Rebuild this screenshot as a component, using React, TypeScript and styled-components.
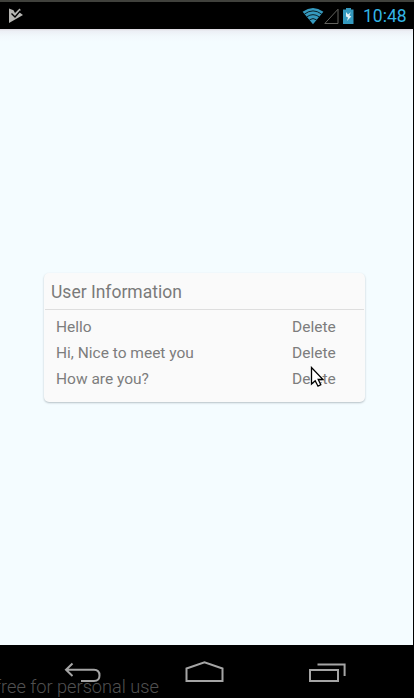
import React from 'react';
import styled, { createGlobalStyle } from 'styled-components';

const GlobalStyle = createGlobalStyle`
  * { box-sizing: border-box; }
  body { margin: 0; background: #000; overflow: hidden; }
`;

const Device = styled.div`
  position: relative;
  display: flex;
  flex-direction: column;
  width: 414px;
  height: 698px;
  overflow: hidden;
  background: #000;
  border-top: 2px solid #40413c;
  font-family: Roboto, sans-serif;
`;

const StatusBar = styled.header`
  display: flex;
  align-items: center;
  justify-content: space-between;
  height: 27px;
  padding: 0 7px 0 8px;
`;

const StatusIcons = styled.div`
  display: flex;
  align-items: center;
  height: 27px;
`;

const Clock = styled.time`
  width: 44px;
  margin-left: 6px;
  color: #33b5e5;
  font-size: 17.5px;
  line-height: 28px;
  white-space: nowrap;
`;

const Icon = styled.svg`
  display: block;
  flex: none;
`;

const Screen = styled.main`
  display: flex;
  flex: none;
  align-items: flex-start;
  width: 413px;
  height: 616px;
  padding: 244px 0 0 44px;
  background: linear-gradient(#dcd8df 0, #eceff5 2px, #f1f8fc 7px, #f4fcff 13px);
`;

const Card = styled.section`
  width: 321px;
  height: 129px;
  padding: 0 1px;
  background: #fafafa;
  border-radius: 5px;
  box-shadow: 0 1px 2px rgba(40, 55, 65, 0.3);
`;

const CardTitle = styled.h1`
  height: 37px;
  margin: 0;
  padding: 1px 0 0 6px;
  border-bottom: 1px solid #dedede;
  color: #7a7a7a;
  font-size: 17.5px;
  font-weight: 400;
  line-height: 37px;
`;

const List = styled.ul`
  margin: 0;
  padding: 4px 0 0 11px;
  list-style: none;
`;

const Row = styled.li`
  display: grid;
  grid-template-columns: 236px 1fr;
  height: 26px;
  color: #7d7d7d;
  font-size: 15.5px;
  line-height: 26px;
`;

const DeleteLabel = styled.span`
  cursor: pointer;
`;

const NavBar = styled.nav`
  display: flex;
  flex: none;
  height: 53px;
  padding: 15px 0 0 63px;
`;

const NavButton = styled.span<{ $gap?: number }>`
  width: 42px;
  margin-right: ${({ $gap = 0 }) => $gap}px;
`;

const Watermark = styled.div`
  position: absolute;
  left: -5px;
  bottom: -1px;
  color: #505050;
  font-size: 18.2px;
  font-weight: 300;
  line-height: 24px;
  white-space: nowrap;
`;

const Pointer = styled.svg`
  position: absolute;
  left: 310px;
  top: 364px;
`;

const messages = ['Hello', 'Hi, Nice to meet you', 'How are you?'];

export default function App() {
  return (
    <>
      <GlobalStyle />
      <Device>
        <StatusBar>
          <Icon width="16" height="17" viewBox="0 0 16 17">
            <path d="M1 1.5 L5.5 3.3 L7 6 L11.5 1.5 L12.8 3 L11.3 5.3 L15 8 L1 16Z" fill="#b5b5b2" />
            <path d="M3.5 6.5 L7 10 L12.5 3.8" fill="none" stroke="#000" strokeWidth="1.4" />
          </Icon>
          <StatusIcons>
            <Icon width="22" height="18" viewBox="0 0 22 18">
              <path d="M.6 4.7 Q11 -2.5 21.4 4.7 L11 17.2Z" fill="#3599be" />
              <path d="M2.5 7 Q11 .8 19.5 7 M4.8 9.8 Q11 5.5 17.2 9.8 M7.5 12.8 Q11 10.3 14.5 12.8" fill="none" stroke="#000" strokeWidth=".8" />
            </Icon>
            <Icon width="17" height="18" viewBox="0 0 17 18">
              <path d="M0.8 16.5 L14 2.2 V16.5Z" fill="none" stroke="#62625e" />
            </Icon>
            <Icon width="16" height="18" viewBox="0 0 16 18">
              <path d="M5 1 H10 V2.5 H12.5 V17 H2 V2.5 H5Z" fill="#3599be" />
              <path d="M5 5 L7 7.5 L9.8 5.2 L8.4 8.5 L10.3 9.5 L6 14 L7 10.5 L5 9.5Z" fill="#e4f1f5" />
            </Icon>
            <Clock>10:48</Clock>
          </StatusIcons>
        </StatusBar>
        <Screen>
          <Card>
            <CardTitle>User Information</CardTitle>
            <List>
              {messages.map((message) => (
                <Row key={message}>
                  <span>{message}</span>
                  <DeleteLabel>Delete</DeleteLabel>
                </Row>
              ))}
            </List>
          </Card>
        </Screen>
        <NavBar>
          <NavButton $gap={79}>
            <Icon width="42" height="24" viewBox="0 0 42 24">
              <path d="M9.5 3.5 L3 9.8 L9.5 16 M3.5 9.8 H31 Q36.5 9.8 36.5 15.5 Q36.5 21 31 21 H18" fill="none" stroke="#a5a5a5" strokeWidth="2" />
            </Icon>
          </NavButton>
          <NavButton $gap={81}>
            <Icon width="42" height="24" viewBox="0 0 42 24">
              <path d="M2.5 21 V8.5 L20.5 2.2 L38.5 8.5 V21Z" fill="none" stroke="#a5a5a5" strokeWidth="2" />
            </Icon>
          </NavButton>
          <NavButton>
            <Icon width="42" height="24" viewBox="0 0 42 24">
              <path d="M3 10 H31 V21 H3Z M10.5 4.4 H37.6 V16" fill="none" stroke="#a5a5a5" strokeWidth="2" />
            </Icon>
          </NavButton>
        </NavBar>
        <Watermark>free for personal use</Watermark>
        <Pointer width="15" height="24" viewBox="0 0 15 24">
          <path d="M1.5 1.5 V18 L5.2 14.7 L8 20.2 L10.8 18.8 L8.2 13.5 H13Z" fill="#fff" stroke="#000" strokeWidth="1.3" />
        </Pointer>
      </Device>
    </>
  );
}
